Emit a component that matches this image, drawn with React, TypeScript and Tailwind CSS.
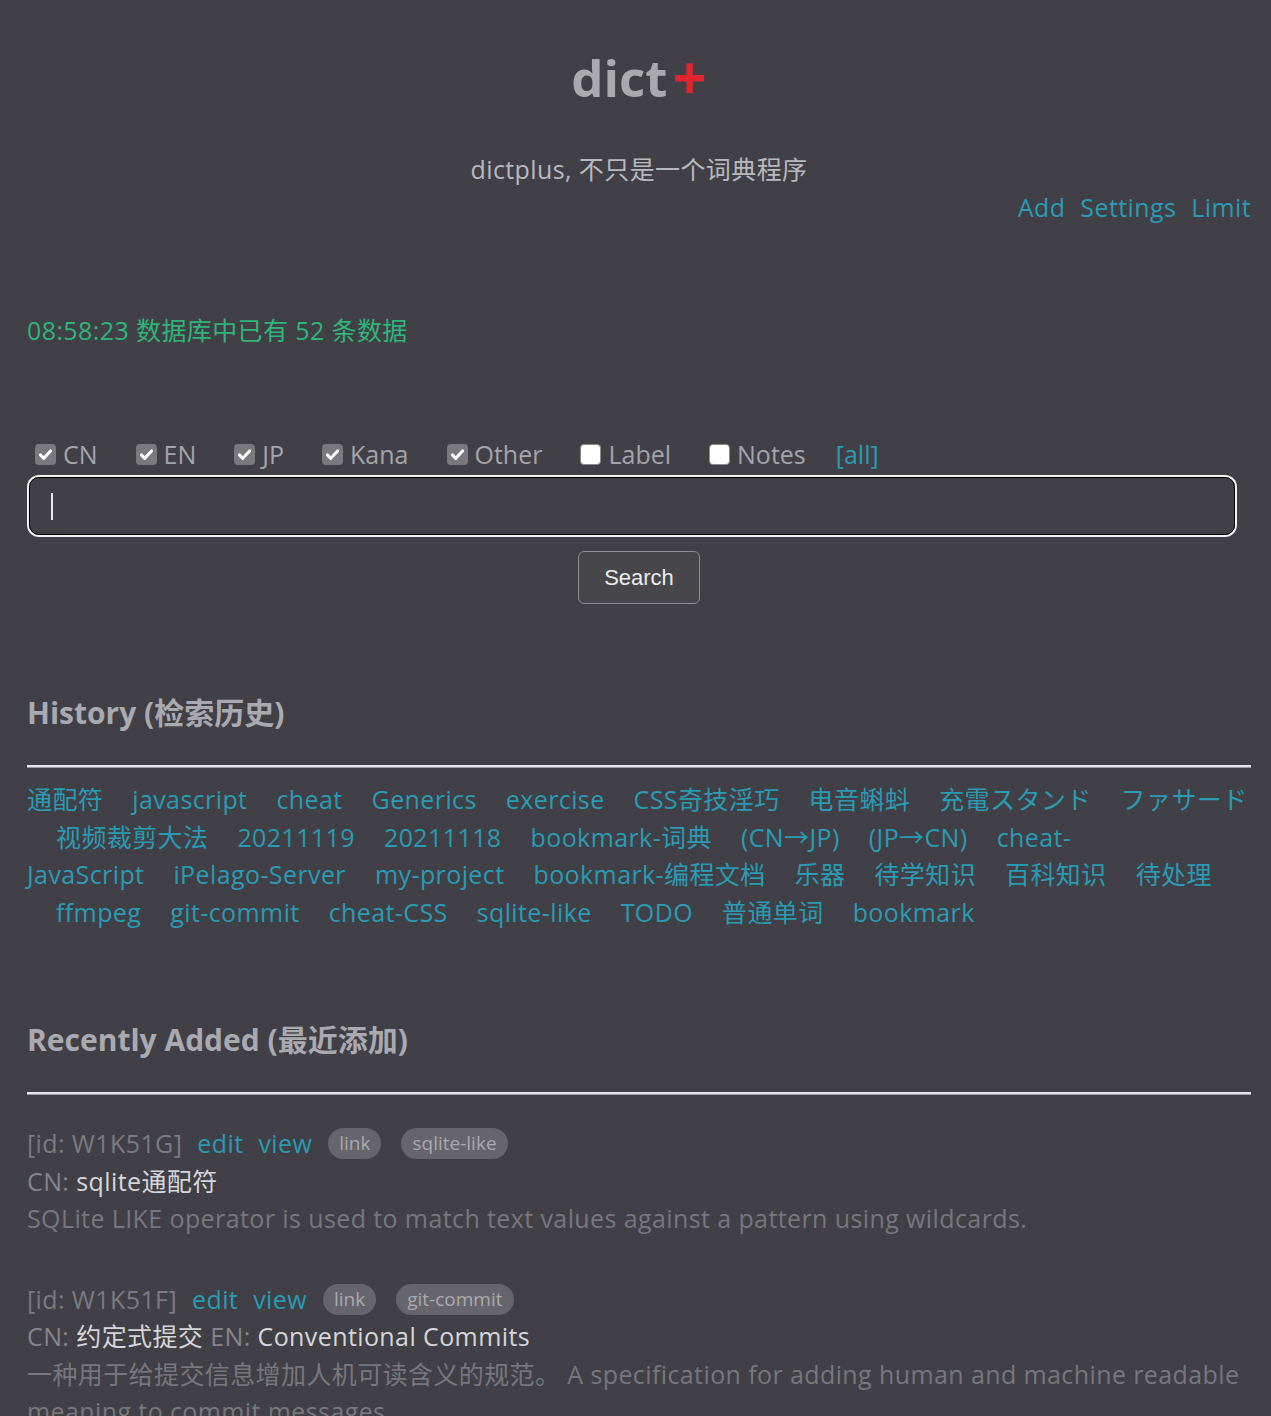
import React from 'react';

const font = { fontFamily: '"Open Sans", "Noto Sans CJK SC", sans-serif' };

const filters = [
  { label: 'CN', checked: true },
  { label: 'EN', checked: true },
  { label: 'JP', checked: true },
  { label: 'Kana', checked: true },
  { label: 'Other', checked: true },
  { label: 'Label', checked: false },
  { label: 'Notes', checked: false },
];

// history rows, kept as the page shows them
const historyRows: { indent: boolean; items: string[] }[] = [
  { indent: false, items: ['通配符', 'javascript', 'cheat', 'Generics', 'exercise', 'CSS奇技淫巧', '电音蝌蚪', '充電スタンド', 'ファサード'] },
  { indent: true, items: ['视频裁剪大法', '20211119', '20211118', 'bookmark-词典', '(CN→JP)', '(JP→CN)', 'cheat-'] },
  { indent: false, items: ['JavaScript', 'iPelago-Server', 'my-project', 'bookmark-编程文档', '乐器', '待学知识', '百科知识', '待处理'] },
  { indent: true, items: ['ffmpeg', 'git-commit', 'cheat-CSS', 'sqlite-like', 'TODO', '普通单词', 'bookmark'] },
];

function Checkbox({ checked }: { checked: boolean }) {
  if (!checked) {
    return <span className="inline-block w-[21px] h-[21px] rounded-[4px] bg-white border border-[#8a8a8a]" />;
  }
  return (
    <span className="inline-flex items-center justify-center w-[21px] h-[21px] rounded-[4px] bg-[#7a7a7e]">
      <svg viewBox="0 0 16 16" className="w-[17px] h-[17px]">
        <path d="M3.2 8.4 L6.4 11.6 L12.8 4.6" fill="none" stroke="white" strokeWidth="2.8" strokeLinecap="round" strokeLinejoin="round" />
      </svg>
    </span>
  );
}

function Hr() {
  return <div className="h-[3px] border-t-2 border-t-[#e8e8ea] border-b border-b-[#9c9ca2]" />;
}

function Pill({ children }: { children: React.ReactNode }) {
  return (
    <span className="inline-flex items-center h-[31px] px-[11px] rounded-full bg-[#66656b] text-[#a9a9ae] text-[19px] leading-none tracking-normal">
      {children}
    </span>
  );
}

export default function App() {
  return (
    <div className="min-h-[1416px] bg-[#414046] pl-[27px] pr-[20px] pb-[40px] text-[25px] leading-[37.5px] tracking-[0.4px]" style={font}>
      {/* Header */}
      <div className="pt-[40px] h-[115px] flex justify-center items-end font-bold leading-[75px] tracking-normal">
        <span className="text-[51px] text-[#a9a9ae]">dict</span>
        <span className="ml-[5px] text-[60px] text-[#e0262b]">+</span>
      </div>
      <p className="mt-[36px] text-center text-[#b8b8bf]">dictplus, 不只是一个词典程序</p>
      <div className="flex justify-end gap-[15px] text-[#2a9bb4]">
        <a>Add</a>
        <a>Settings</a>
        <a>Limit</a>
      </div>

      <p className="mt-[86px] text-[#2fb57a]">08:58:23 数据库中已有 52 条数据</p>

      {/* Filters */}
      <div className="mt-[86px] flex items-center text-[#a4a4ac] tracking-normal">
        {filters.map((f) => (
          <label key={f.label} className="flex items-center mr-[30px]">
            <span className="ml-[8px] flex"><Checkbox checked={f.checked} /></span>
            <span className="ml-[7px]">{f.label}</span>
          </label>
        ))}
        <a className="text-[#2a9bb4]">[all]</a>
      </div>

      <div className="mt-[4px] mx-[2px] w-[1206px] h-[58px] rounded-[10px] border border-black shadow-[0_0_0_2px_#f2f2f2] flex items-center pl-[21px]">
        <span className="w-[2px] h-[27px] bg-[#e6e6e6]" />
      </div>

      <div className="mt-[16px] flex justify-center">
        <button
          className="w-[122px] h-[53px] rounded-[6px] border border-[#8e8e92] bg-[#47464b] text-[#ececee] text-[22px] tracking-normal"
          style={{ fontFamily: '"Liberation Sans", Arial, sans-serif' }}
        >
          Search
        </button>
      </div>

      {/* History */}
      <h2 className="mt-[86px] text-[30px] leading-[45px] font-bold text-[#a9a9b0] tracking-normal">History (检索历史)</h2>
      <div className="mt-[30px]"><Hr /></div>
      <div className="mt-[13px] text-[#2a9bb4]">
        {historyRows.map((row, i) => (
          <div key={i} className="whitespace-nowrap">
            {row.items.map((item, j) => (
              <a key={item} className={j === 0 && !row.indent ? '' : 'ml-[29px]'}>{item}</a>
            ))}
          </div>
        ))}
      </div>

      {/* Recently added */}
      <h2 className="mt-[86px] text-[30px] leading-[45px] font-bold text-[#a9a9b0] tracking-normal">Recently Added (最近添加)</h2>
      <div className="mt-[30px]"><Hr /></div>

      <div className="mt-[30px]">
        <div className="flex items-center">
          <span className="text-[#7b7b81]">[id: W1K51G]</span>
          <a className="ml-[15px] text-[#2a9bb4]">edit</a>
          <a className="ml-[15px] text-[#2a9bb4]">view</a>
          <span className="ml-[16px] flex"><Pill>link</Pill></span>
          <span className="ml-[20px] flex"><Pill>sqlite-like</Pill></span>
        </div>
        <p>
          <span className="text-[#85858b]">CN: </span>
          <span className="text-[#d6d6da]">sqlite通配符</span>
        </p>
        <p className="text-[#77777d]">SQLite LIKE operator is used to match text values against a pattern using wildcards.</p>
      </div>

      <div className="mt-[43px]">
        <div className="flex items-center">
          <span className="text-[#7b7b81]">[id: W1K51F]</span>
          <a className="ml-[15px] text-[#2a9bb4]">edit</a>
          <a className="ml-[15px] text-[#2a9bb4]">view</a>
          <span className="ml-[16px] flex"><Pill>link</Pill></span>
          <span className="ml-[20px] flex"><Pill>git-commit</Pill></span>
        </div>
        <p>
          <span className="text-[#85858b]">CN: </span>
          <span className="text-[#d6d6da]">约定式提交</span>
          <span className="text-[#85858b]"> EN: </span>
          <span className="text-[#d6d6da]">Conventional Commits</span>
        </p>
        <p className="text-[#77777d]">
          一种用于给提交信息增加人机可读含义的规范。 A specification for adding human and machine readable meaning to commit messages
        </p>
      </div>
    </div>
  );
}
